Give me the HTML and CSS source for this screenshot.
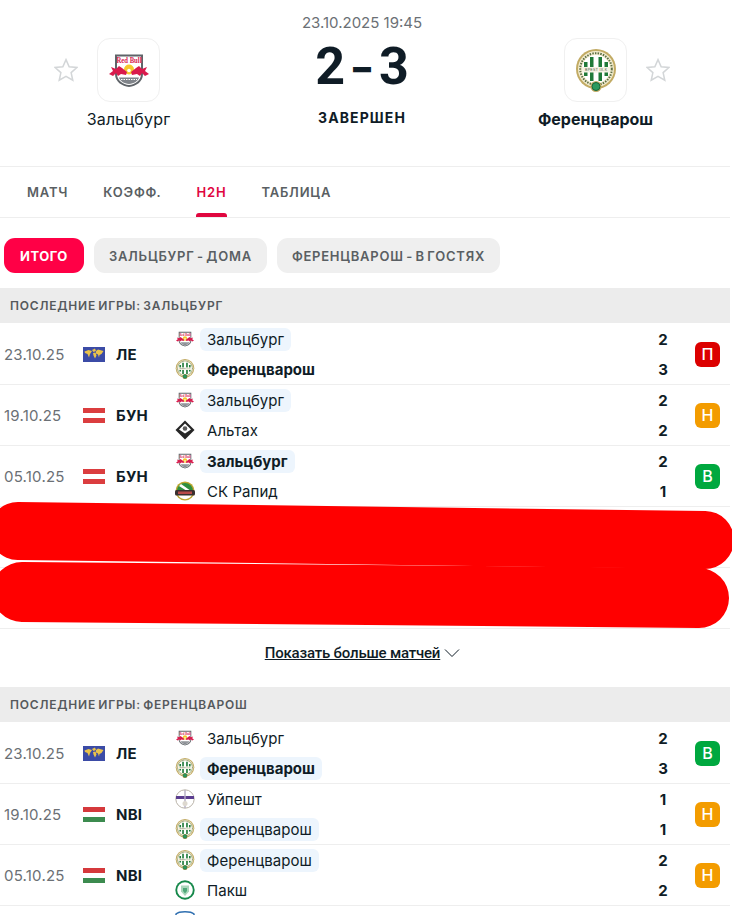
FILE: index.html
```html
<!DOCTYPE html>
<html lang="ru">
<head>
  <meta charset="UTF-8">
  <title>Зальцбург - Ференцварош</title>
  <meta name="viewport" content="width=device-width, initial-scale=1.0" />
  <link rel="stylesheet" href="styles.css">
</head>
<body>

  <svg class="defs" width="0" height="0">
    <defs>
      <symbol id="star" viewBox="1 1 22 22">
        <path d="M12 2.500l2.900 6.500 7.100.7-5.300 4.700 1.500 7-6.200-3.600-6.200 3.600 1.500-7L2 9.700l7.100-.7z" fill="#fff" stroke="#d3d6d8" stroke-width="1.400" stroke-linejoin="miter"/>
      </symbol>
      <symbol id="salzburg" viewBox="0 0 40 33">
        <path d="M6 .5h28V20c0 8-7 12-14 13C13 32 6 28 6 20z" fill="#5f6469"/>
        <path d="M8 2.500h24V20c0 6.500-6 10.500-12 11-6-.5-12-4.500-12-11z" fill="#fff"/>
        <text x="20" y="9" class="crest-text" textLength="25" lengthAdjust="spacingAndGlyphs">Red Bull</text>
        <circle cx="20" cy="15.500" r="5" fill="#f6c92e"/>
        <circle cx="20" cy="16.500" r="1.800" fill="#fff"/>
        <path d="M0 20l4-3-2-4 5 2 3-3 3 2 5 4-1 3-5-1-3 2-2-3-3 3zM40 20l-4-3 2-4-5 2-3-3-3 2-5 4 1 3 5-1 3 2 2-3 3 3z" fill="#d91a4c"/>
        <path d="M10 23.500h20c-1 3.500-5 6-10 6.500-5-.5-9-3-10-6.500z" fill="#80848a"/>
        <path d="M12 25.500h16" stroke="#fff" stroke-width="1.200" stroke-dasharray="1.500 1"/>
      </symbol>
      <symbol id="ferenc" viewBox="0 0 40 43">
        <circle cx="20" cy="20" r="20" fill="#c2ab64"/>
        <circle cx="20" cy="20" r="18" fill="#f3ecd0"/>
        <circle cx="20" cy="20" r="15.800" fill="none" stroke="#5c6f45" stroke-width="2" stroke-dasharray="1.500 1.200"/>
        <circle cx="20" cy="20" r="14" fill="#fff"/>
        <path d="M8 13h3.500v14H8zM14 8h3.500v24H14zM22.500 8H26v24h-3.500zM28.500 13H32v14h-3.500z" fill="#1f7a39"/>
        <rect x="6" y="18" width="28" height="5.500" fill="#f5f2e4"/>
        <text x="20" y="22.300" class="crest-band" textLength="22">BPEST IX.K</text>
        <circle cx="20" cy="37.500" r="5.500" fill="#c2ab64"/>
        <circle cx="20" cy="37.500" r="4" fill="#2b9a5f" stroke="#14663a"/>
      </symbol>
      <symbol id="altach" viewBox="0 0 20 20">
        <path d="M10 .5l9.500 9.500-9.500 9.500L.5 10z" fill="#262626"/>
        <path d="M10 3.500l6 6-6 4-6-4z" fill="#fff"/>
        <circle cx="10" cy="8.500" r="2.300" fill="#5a5a5a"/>
      </symbol>
      <symbol id="rapid" viewBox="0 0 20 20">
        <circle cx="10" cy="10" r="9.500" fill="#bda62f"/>
        <path d="M2 10a8 8 0 0 1 16 0z" fill="#2f8f3f"/>
        <path d="M6 3l10 7h-4L4 5z" fill="#fff"/>
        <path d="M3 14a8 8 0 0 0 14 0z" fill="#fff"/>
        <rect x="0" y="9" width="20" height="5.500" rx="1.500" fill="#3a3030"/>
        <rect x="3" y="10.500" width="14" height="2.500" fill="#b84a4a"/>
      </symbol>
      <symbol id="ujpest" viewBox="0 0 20 20">
        <circle cx="10" cy="10" r="9.200" fill="#fff" stroke="#b9b3a8"/>
        <rect x="1" y="7" width="18" height="3" fill="#5b3d8f"/>
        <rect x="9.300" y="1" width="1.400" height="18" fill="#b5aec2"/>
        <circle cx="10" cy="14.500" r="2.500" fill="#ddd8cf"/>
      </symbol>
      <symbol id="paks" viewBox="0 0 20 20">
        <circle cx="10" cy="10" r="9.700" fill="#15884a"/>
        <circle cx="10" cy="10" r="7.800" fill="#fff"/>
        <path d="M6 5.500h8v6l-4 4.500-4-4.500z" fill="#a9d6bb"/>
        <path d="M8 8h4v3l-2 2.500L8 11z" fill="#4da878"/>
      </symbol>
      <symbol id="blue-crest" viewBox="0 0 20 20">
        <path d="M1 4c3-3 15-3 18 0v8l-9 7-9-7z" fill="#fff" stroke="#2f6fb0" stroke-width="1.500"/>
        <path d="M4 6h12v3H4z" fill="#2f6fb0"/>
      </symbol>
      <symbol id="flag-world" viewBox="0 0 22 15">
        <rect width="22" height="15" fill="#3b4ba6"/>
        <path d="M1.500 4.500l4-1.500 3.500 1-2 3-1 3.500-1.500-3.500-2.500-1zM9 3l3-1.500 1 2.500-2.500 1zM10 6l2.500-.5 1 3-1.500 3-1.500-3zM13 4l2-1.500 5.500 1.500-2 3-2 1-.5 2.500-1-3-2-1z" fill="#eac34a"/>
      </symbol>
      <symbol id="flag-at" viewBox="0 0 22 15">
        <rect width="22" height="15" fill="#fff"/>
        <rect width="22" height="5" fill="#db3d3f"/>
        <rect y="10" width="22" height="5" fill="#db3d3f"/>
      </symbol>
      <symbol id="flag-hu" viewBox="0 0 22 15">
        <rect width="22" height="15" fill="#fff"/>
        <rect width="22" height="5" fill="#d5393c"/>
        <rect y="10" width="22" height="5" fill="#3c8b4f"/>
      </symbol>
    </defs>
  </svg>

  <div class="container">

    <header class="match">
      <div class="side">
        <svg class="star"><use href="#star"/></svg>
        <div class="team">
          <div class="logo"><svg class="logo-salzburg"><use href="#salzburg"/></svg></div>
          <div class="team-name">Зальцбург</div>
        </div>
      </div>
      <div class="center">
        <div class="date">23.10.2025 19:45</div>
        <div class="score"><span>2</span><span class="dash">–</span><span>3</span></div>
        <div class="status">ЗАВЕРШЕН</div>
      </div>
      <div class="side">
        <div class="team">
          <div class="logo"><svg class="logo-ferenc"><use href="#ferenc"/></svg></div>
          <div class="team-name winner">Ференцварош</div>
        </div>
        <svg class="star"><use href="#star"/></svg>
      </div>
    </header>

    <nav class="tabs">
      <a class="tab">МАТЧ</a>
      <a class="tab">КОЭФФ.</a>
      <a class="tab active">H2H</a>
      <a class="tab">ТАБЛИЦА</a>
    </nav>

    <div class="pills">
      <a class="pill active">ИТОГО</a>
      <a class="pill">ЗАЛЬЦБУРГ - ДОМА</a>
      <a class="pill">ФЕРЕНЦВАРОШ - В ГОСТЯХ</a>
    </div>

    <h3 class="section-title">ПОСЛЕДНИЕ ИГРЫ: ЗАЛЬЦБУРГ</h3>
    <div class="games">
      <div class="game">
        <div class="game-date">23.10.25</div>
        <svg class="flag"><use href="#flag-world"/></svg>
        <div class="league">ЛЕ</div>
        <div class="teams">
          <div class="line"><svg class="crest crest-sb"><use href="#salzburg"/></svg><span class="club mark">Зальцбург</span><span class="goals">2</span></div>
          <div class="line"><svg class="crest"><use href="#ferenc"/></svg><span class="club bold">Ференцварош</span><span class="goals">3</span></div>
        </div>
        <div class="result lose">П</div>
      </div>
      <div class="game">
        <div class="game-date">19.10.25</div>
        <svg class="flag"><use href="#flag-at"/></svg>
        <div class="league">БУН</div>
        <div class="teams">
          <div class="line"><svg class="crest crest-sb"><use href="#salzburg"/></svg><span class="club mark">Зальцбург</span><span class="goals">2</span></div>
          <div class="line"><svg class="crest"><use href="#altach"/></svg><span class="club">Альтах</span><span class="goals">2</span></div>
        </div>
        <div class="result draw">Н</div>
      </div>
      <div class="game">
        <div class="game-date">05.10.25</div>
        <svg class="flag"><use href="#flag-at"/></svg>
        <div class="league">БУН</div>
        <div class="teams">
          <div class="line"><svg class="crest crest-sb"><use href="#salzburg"/></svg><span class="club mark bold">Зальцбург</span><span class="goals">2</span></div>
          <div class="line"><svg class="crest"><use href="#rapid"/></svg><span class="club">СК Рапид</span><span class="goals">1</span></div>
        </div>
        <div class="result win">В</div>
      </div>
      <div class="game"></div>
      <div class="game"></div>

      <!-- red scribble over the two hidden rows -->
      <svg class="scribble" viewBox="0 0 732 130">
        <path d="M18 29L705 38" stroke="#ff0000" stroke-width="58" stroke-linecap="round" fill="none"/>
        <path d="M22 90L699 96" stroke="#ff0000" stroke-width="60" stroke-linecap="round" fill="none"/>
      </svg>
    </div>

    <a class="more">
      <span class="more-text">Показать больше матчей</span>
      <svg class="chevron" viewBox="0 0 16 10"><path d="M1 1.500l7 7 7-7" fill="none" stroke="#0f1c26" stroke-width="1"/></svg>
    </a>

    <h3 class="section-title">ПОСЛЕДНИЕ ИГРЫ: ФЕРЕНЦВАРОШ</h3>
    <div class="games">
      <div class="game">
        <div class="game-date">23.10.25</div>
        <svg class="flag"><use href="#flag-world"/></svg>
        <div class="league">ЛЕ</div>
        <div class="teams">
          <div class="line"><svg class="crest crest-sb"><use href="#salzburg"/></svg><span class="club">Зальцбург</span><span class="goals">2</span></div>
          <div class="line"><svg class="crest"><use href="#ferenc"/></svg><span class="club mark bold">Ференцварош</span><span class="goals">3</span></div>
        </div>
        <div class="result win">В</div>
      </div>
      <div class="game">
        <div class="game-date">19.10.25</div>
        <svg class="flag"><use href="#flag-hu"/></svg>
        <div class="league">NBI</div>
        <div class="teams">
          <div class="line"><svg class="crest"><use href="#ujpest"/></svg><span class="club">Уйпешт</span><span class="goals">1</span></div>
          <div class="line"><svg class="crest"><use href="#ferenc"/></svg><span class="club mark">Ференцварош</span><span class="goals">1</span></div>
        </div>
        <div class="result draw">Н</div>
      </div>
      <div class="game">
        <div class="game-date">05.10.25</div>
        <svg class="flag"><use href="#flag-hu"/></svg>
        <div class="league">NBI</div>
        <div class="teams">
          <div class="line"><svg class="crest"><use href="#ferenc"/></svg><span class="club mark">Ференцварош</span><span class="goals">2</span></div>
          <div class="line"><svg class="crest"><use href="#paks"/></svg><span class="club">Пакш</span><span class="goals">2</span></div>
        </div>
        <div class="result draw">Н</div>
      </div>
      <div class="game-cut">
        <svg class="crest"><use href="#blue-crest"/></svg>
      </div>
    </div>

  </div>

</body>
</html>
```

FILE: styles.css
```css
html, body {
  height: 915px;
  overflow: hidden;
}

body {
  font-family: Inter, "Noto Sans", sans-serif;
  margin: 0;
  background-color: white;
  color: #0f1c26;
}

.defs {
  display: block;
  height: 0;
}

.container {
  width: 730px;
}

.crest-text {
  font-family: "Liberation Serif", serif;
  font-size: 7.500px;
  font-weight: bold;
  fill: #d8214f;
  text-anchor: middle;
}

.crest-band {
  font-family: "Liberation Sans", sans-serif;
  font-size: 3.500px;
  fill: #4a5a3c;
  text-anchor: middle;
}

/* match header */
.match {
  display: flex;
  height: 167px;
  padding: 0 60px 0 54px;
  box-sizing: border-box;
  border-bottom: 1px solid #eee;
}

.side {
  display: flex;
  align-items: flex-start;
  gap: 19px;
  padding-top: 38px;
}

.star {
  width: 24px;
  height: 24px;
  margin-top: 20px;
}

.team {
  display: flex;
  flex-direction: column;
  align-items: center;
  width: 63px;
}

.logo {
  width: 63px;
  height: 64px;
  flex: none;
  display: flex;
  align-items: center;
  justify-content: center;
  box-sizing: border-box;
  border: 1px solid #f0f0f0;
  border-radius: 13px;
}

.logo-salzburg {
  width: 40px;
  height: 33px;
}

.logo-ferenc {
  width: 40px;
  height: 43px;
}

.team-name {
  margin-top: 7px;
  font-size: 16px;
  line-height: 20px;
  letter-spacing: 0.2px;
  white-space: nowrap;
}

.winner {
  font-weight: 700;
  letter-spacing: 0;
}

.center {
  flex: 1;
  display: flex;
  flex-direction: column;
  align-items: center;
  padding-top: 14px;
}

.date {
  font-size: 15px;
  line-height: 18px;
  color: #6b7075;
}

.score {
  display: flex;
  align-items: center;
  gap: 8px;
  margin-top: 5px;
  font-family: Roboto, sans-serif;
  font-size: 52px;
  font-weight: 700;
  line-height: 60px;
}

.dash {
  font-family: Inter, sans-serif;
  font-size: 36px;
  font-weight: 900;
}

.status {
  margin-top: 12px;
  font-size: 14px;
  font-weight: 700;
  line-height: 18px;
  letter-spacing: 1.1px;
}

/* tabs */
.tabs {
  display: flex;
  gap: 35px;
  height: 51px;
  padding-left: 27px;
  box-sizing: border-box;
  border-bottom: 1px solid #eee;
}

.tab {
  position: relative;
  padding-top: 16px;
  font-size: 13px;
  font-weight: 600;
  line-height: 18px;
  letter-spacing: 0.8px;
  color: #5a5f63;
}

.tab.active {
  color: #e0063f;
}

.tab.active::after {
  content: "";
  position: absolute;
  left: -1px;
  right: -1px;
  bottom: 0;
  height: 4px;
  border-radius: 3px 3px 0 0;
  background-color: #e0063f;
}

/* filter pills */
.pills {
  display: flex;
  gap: 10px;
  padding: 20px 4px 15px;
}

.pill {
  height: 35px;
  padding: 0 15px;
  display: flex;
  align-items: center;
  border-radius: 11px;
  background-color: #efefef;
  font-size: 13px;
  font-weight: 600;
  letter-spacing: 0.75px;
  word-spacing: -1.5px;
  color: #5a5f63;
}

.pill.active {
  padding: 0 16px;
  background-color: #ff0046;
  color: white;
  font-weight: 700;
  letter-spacing: 0.5px;
}

/* games */
.section-title {
  margin: 0 0 1px;
  height: 35px;
  padding-left: 10px;
  display: flex;
  align-items: center;
  background-color: #ececec;
  font-size: 12px;
  font-weight: 600;
  letter-spacing: 0.8px;
  word-spacing: -1.5px;
  color: #55595c;
}

.games {
  position: relative;
}

.game {
  display: flex;
  align-items: center;
  height: 61px;
  box-sizing: border-box;
  border-bottom: 1px solid #eee;
}

.game-date {
  width: 83px;
  padding-left: 4px;
  box-sizing: border-box;
  font-size: 15px;
  color: #6b7075;
  letter-spacing: 0.2px;
}

.flag {
  width: 22px;
  height: 15px;
  flex: none;
}

.league {
  width: 70px;
  padding-left: 11px;
  box-sizing: border-box;
  font-size: 15px;
  font-weight: 700;
  letter-spacing: 0.2px;
}

.teams {
  flex: 1;
  display: flex;
  flex-direction: column;
  gap: 6px;
}

.line {
  display: flex;
  align-items: center;
  height: 24px;
}

.crest {
  width: 20px;
  height: 20px;
  flex: none;
  margin-right: 5px;
}

.crest-sb {
  width: 18px;
  height: 16px;
  margin: 0 6px 0 1px;
}

.club {
  padding: 0 7px;
  height: 23px;
  display: flex;
  align-items: center;
  font-size: 15px;
  letter-spacing: 0.05px;
  border-radius: 6px;
}

.mark {
  background-color: #edf5fd;
}

.bold {
  font-weight: 700;
  letter-spacing: 0;
}

.goals {
  margin-left: auto;
  width: 20px;
  text-align: center;
  font-size: 15px;
  font-weight: 700;
}

.result {
  width: 25px;
  height: 25px;
  margin: 0 10px 0 22px;
  display: flex;
  align-items: center;
  justify-content: center;
  border-radius: 6px;
  color: white;
  font-size: 16px;
  font-weight: 500;
}

.lose {
  background-color: #dc0000;
}

.draw {
  background-color: #f39c00;
}

.win {
  background-color: #00a83f;
}

.scribble {
  position: absolute;
  left: 0;
  top: 178px;
  width: 732px;
  height: 130px;
}

.more {
  display: flex;
  align-items: center;
  justify-content: center;
  gap: 4px;
  height: 58px;
  padding: 0 5px 10px 0;
  box-sizing: border-box;
  font-family: Roboto, sans-serif;
  font-size: 15px;
  font-weight: 500;
}

.more-text {
  text-decoration: underline;
  letter-spacing: -0.2px;
}

.chevron {
  width: 16px;
  height: 10px;
}

.game-cut {
  height: 9px;
  overflow: hidden;
  padding: 4px 0 0 175px;
  box-sizing: border-box;
}
```
